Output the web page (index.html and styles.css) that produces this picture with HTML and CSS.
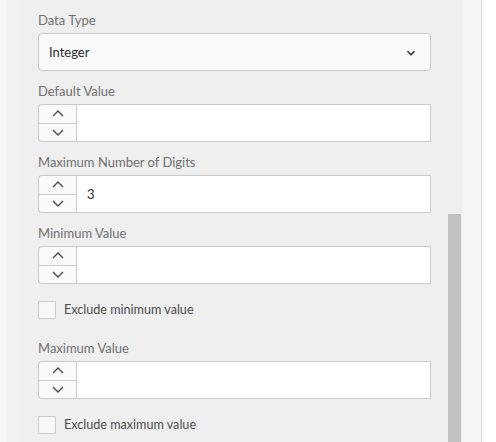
FILE: index.html
```html
<!DOCTYPE html>
<html>
<head>
<meta charset="utf-8">
<link rel="stylesheet" href="styles.css">
</head>
<body>
<div class="page">
  <div class="edge"></div>
  <div class="panel">
    <div class="form">
      <div class="field">
        <div class="label">Data Type</div>
        <div class="select">
          <span class="value">Integer</span>
          <svg class="caret" width="10" height="6" viewBox="0 0 10 6"><path d="M1.5 1.2 L5 4.7 L8.5 1.2" fill="none" stroke="#2c2c2c" stroke-width="1.5"/></svg>
        </div>
      </div>
      <div class="field">
        <div class="label">Default Value</div>
        <div class="number">
          <div class="stepper">
            <div class="step"><svg width="12" height="7" viewBox="0 0 12 7"><path d="M1 6 L6 1 L11 6" fill="none" stroke="#4b4b4b" stroke-width="1.4"/></svg></div>
            <div class="step"><svg width="12" height="7" viewBox="0 0 12 7"><path d="M1 1 L6 6 L11 1" fill="none" stroke="#4b4b4b" stroke-width="1.4"/></svg></div>
          </div>
          <div class="input"></div>
        </div>
      </div>
      <div class="field">
        <div class="label">Maximum Number of Digits</div>
        <div class="number">
          <div class="stepper">
            <div class="step"><svg width="12" height="7" viewBox="0 0 12 7"><path d="M1 6 L6 1 L11 6" fill="none" stroke="#4b4b4b" stroke-width="1.4"/></svg></div>
            <div class="step"><svg width="12" height="7" viewBox="0 0 12 7"><path d="M1 1 L6 6 L11 1" fill="none" stroke="#4b4b4b" stroke-width="1.4"/></svg></div>
          </div>
          <div class="input">3</div>
        </div>
      </div>
      <div class="field">
        <div class="label">Minimum Value</div>
        <div class="number">
          <div class="stepper">
            <div class="step"><svg width="12" height="7" viewBox="0 0 12 7"><path d="M1 6 L6 1 L11 6" fill="none" stroke="#4b4b4b" stroke-width="1.4"/></svg></div>
            <div class="step"><svg width="12" height="7" viewBox="0 0 12 7"><path d="M1 1 L6 6 L11 1" fill="none" stroke="#4b4b4b" stroke-width="1.4"/></svg></div>
          </div>
          <div class="input"></div>
        </div>
      </div>
      <div class="check">
        <span class="box"></span>
        <span class="check-label">Exclude minimum value</span>
      </div>
      <div class="field">
        <div class="label">Maximum Value</div>
        <div class="number">
          <div class="stepper">
            <div class="step"><svg width="12" height="7" viewBox="0 0 12 7"><path d="M1 6 L6 1 L11 6" fill="none" stroke="#4b4b4b" stroke-width="1.4"/></svg></div>
            <div class="step"><svg width="12" height="7" viewBox="0 0 12 7"><path d="M1 1 L6 6 L11 1" fill="none" stroke="#4b4b4b" stroke-width="1.4"/></svg></div>
          </div>
          <div class="input"></div>
        </div>
      </div>
      <div class="check">
        <span class="box"></span>
        <span class="check-label">Exclude maximum value</span>
      </div>
    </div>
    <div class="track"><div class="thumb"></div></div>
  </div>
  <div class="side"></div>
  <div class="blank"></div>
</div>
</body>
</html>
```
FILE: styles.css
```css
html, body {
  margin: 0;
  padding: 0;
  height: 100%;
  overflow: hidden;
}
body {
  font-family: Lato, "Open Sans", sans-serif;
  font-size: 13px;
  background: #ffffff;
}
.page {
  display: flex;
  height: 442px;
  overflow: hidden;
}
.edge {
  width: 7px;
  background: #f6f6f6;
  flex: none;
}
.panel {
  width: 455px;
  flex: none;
  display: flex;
  background: #efefef;
  box-shadow: inset 16px 0 0 #f1f1f1;
  overflow: hidden;
}
.form {
  width: 393px;
  padding: 11px 17px 0 31px;
  flex: none;
}
.field {
  margin-bottom: 11px;
}
.label {
  height: 18px;
  line-height: 18px;
  color: #707070;
  margin-bottom: 4px;
  white-space: nowrap;
}
.select {
  height: 36px;
  border: 1px solid #cacaca;
  border-radius: 4px;
  background: #fafafa;
  display: flex;
  align-items: center;
  justify-content: space-between;
  padding: 0 14px 0 10px;
  color: #2c2c2c;
}
.caret {
  margin-top: 1px;
}
.number {
  height: 38px;
  display: flex;
  box-sizing: border-box;
}
.stepper {
  width: 38px;
  box-sizing: border-box;
  border: 1px solid #cacaca;
  border-right: none;
  border-radius: 4px 0 0 4px;
  background: #fafafa;
  display: flex;
  flex-direction: column;
  flex: none;
}
.step {
  flex: 1;
  display: flex;
  align-items: center;
  justify-content: center;
}
.step + .step {
  border-top: 1px solid #cacaca;
}
.input {
  flex: 1;
  box-sizing: border-box;
  border: 1px solid #cacaca;
  background: #ffffff;
  padding-left: 10px;
  line-height: 36px;
  color: #2c2c2c;
}
.check {
  height: 37px;
  margin-top: -4px;
  margin-bottom: 11px;
  display: flex;
  align-items: center;
}
.box {
  width: 18px;
  height: 18px;
  box-sizing: border-box;
  border: 1px solid #cacaca;
  background: #f8f8f8;
  border-radius: 1px;
  flex: none;
}
.check-label {
  margin-left: 8px;
  color: #4b4b4b;
  font-size: 12.6px;
}
.track {
  width: 13px;
  flex: none;
  display: flex;
  flex-direction: column;
}
.thumb {
  margin-top: 214px;
  flex: 1;
  background: #c1c1c1;
}
.side {
  width: 19px;
  flex: none;
  background: #f5f5f5;
  border-right: 1px solid #dcdcdc;
}
.blank {
  flex: 1;
  background: #ffffff;
}
```
